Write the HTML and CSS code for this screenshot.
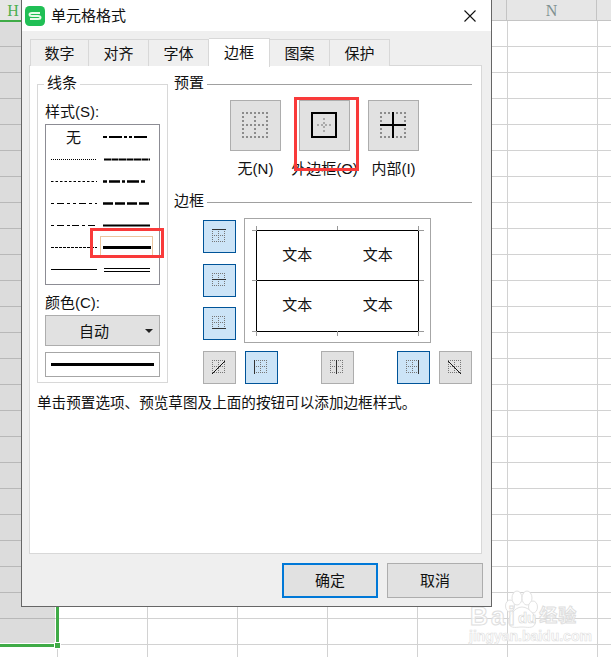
FILE: index.html
```html
<!DOCTYPE html>
<html>
	<head>
		<meta charset="UTF-8">
		<title>单元格格式</title>
		<link rel="stylesheet" href="styles.css">
	</head>
	<body>
		<!-- reusable dotted grids for the border buttons -->
		<svg class="defs" width="0" height="0">
			<symbol id="dots-big" viewBox="0 0 49 49">
				<path d="M11 12H37M11 24H37M11 36H37M12 11V37M24 11V37M36 11V37" fill="none" stroke="#8c8c8c" stroke-width="2" stroke-dasharray="2 2"/>
			</symbol>
			<symbol id="dots-outer" viewBox="0 0 49 49">
				<path d="M11 12H37M11 36H37M12 11V37M36 11V37" fill="none" stroke="#8c8c8c" stroke-width="2" stroke-dasharray="2 2"/>
			</symbol>
			<symbol id="dots-inner" viewBox="0 0 49 49">
				<path d="M17 24H31M24 17V31" fill="none" stroke="#aaa" stroke-width="2" stroke-dasharray="2 2"/>
			</symbol>
			<symbol id="dots-small" viewBox="0 0 31 31">
				<path d="M8 8.500H22M8 14.500H22M8 20.500H22M8.500 8V22M14.500 8V22M20.500 8V22" fill="none" stroke="#777" stroke-width="1" stroke-dasharray="1 1"/>
			</symbol>
		</svg>

		<div id="sheet">
			<div class="col-head">
				<div class="col-h">H</div>
				<div class="col-gap"></div>
				<div class="col-n">N</div>
				<div class="col-o"></div>
			</div>
			<div class="rows"></div>
			<div class="sel-col"></div>
			<div class="sel-line-h"></div>
			<div class="sel-line-bottom"></div>
			<div class="sel-line-right"></div>
			<div class="sel-handle"></div>
		</div>

		<div class="watermark">
			<svg class="paw" width="40" height="42" viewBox="0 0 40 42">
				<g fill="#fff" stroke="#e2e2e2">
					<ellipse cx="8" cy="16" rx="4.500" ry="6"/>
					<ellipse cx="15" cy="8" rx="5" ry="7"/>
					<ellipse cx="25" cy="8" rx="5" ry="7"/>
					<ellipse cx="31" cy="17" rx="4.500" ry="6"/>
					<path d="M20 17C28 17 36 28 33 34C31 39 25 37 20 37C15 37 9 39 7 34C5 28 12 17 20 17Z"/>
				</g>
			</svg>
			<div class="wm-top"><b>Bai</b><b class="wm-du">du</b><b class="wm-cn">经验</b></div>
			<div class="wm-url">jingyan.baidu.com</div>
		</div>

		<div id="dialog">
			<div class="titlebar">
				<svg class="logo" width="20" height="20" viewBox="0 0 20 20">
					<rect width="20" height="20" rx="4.500" fill="#20bf55"/>
					<path d="M15 7H7Q4.500 7 4.500 8.500T7 10H13Q15.500 10 15.500 11.500T13 13H5" fill="none" stroke="#e8fbe9" stroke-width="2"/>
				</svg>
				<span class="title">单元格格式</span>
				<svg class="close" width="12" height="12" viewBox="0 0 12 12">
					<path d="M0.500 0.500L11.500 11.500M11.500 0.500L0.500 11.500" stroke="#111" stroke-width="1.100"/>
				</svg>
			</div>

			<div class="body">
				<div class="tabs">
					<a href="javascript:;" class="tab">数字</a>
					<a href="javascript:;" class="tab">对齐</a>
					<a href="javascript:;" class="tab">字体</a>
					<a href="javascript:;" class="tab active">边框</a>
					<a href="javascript:;" class="tab">图案</a>
					<a href="javascript:;" class="tab">保护</a>
				</div>

				<div class="panel">
					<div class="panel-top">
						<fieldset class="line-group">
							<legend>线条</legend>
							<label class="field-label">样式(S):</label>
							<div class="style-list">
								<span class="none-item">无</span>
								<svg class="style-lines" width="113" height="159" viewBox="0 0 113 159">
									<g fill="none" stroke="#000">
										<path d="M5 34.500H51" stroke-dasharray="1 1"/>
										<path d="M5 56.500H51" stroke-dasharray="2.500 2"/>
										<path d="M5 78.500H51" stroke-dasharray="3 3 7 3 3 3"/>
										<path d="M5 100.500H51" stroke-dasharray="3 3 7 3 3 2 7 3"/>
										<path d="M5 122.500H51" stroke-dasharray="3 1"/>
										<path d="M5 144.500H51"/>
										<path d="M57 12H104" stroke-width="2" stroke-dasharray="4 2 13 2 3 2 3 2 13"/>
										<path d="M58 34.500H104" stroke-width="2" stroke-dasharray="7 .5"/>
										<path d="M57 56.500H102" stroke-width="2.500" stroke-dasharray="4 2 11 2 3 2 12 2 4"/>
										<path d="M57 78.500H103" stroke-width="2.500" stroke-dasharray="10 2 10 2 10 2 10"/>
										<path d="M57 100.500H104" stroke-width="2"/>
										<path d="M57 122.500H105" stroke-width="3"/>
										<path d="M58 143.500H104M58 146.500H104"/>
										<rect x="54.500" y="111.500" width="52" height="19" stroke="#d98a3c" stroke-dasharray="1 1"/>
									</g>
								</svg>
							</div>
							<label class="field-label color-label">颜色(C):</label>
							<div class="color-select">
								<span>自动</span>
								<i class="caret"></i>
							</div>
							<div class="line-preview"><i></i></div>
						</fieldset>

						<div class="right-col">
							<div class="section-head"><span>预置</span><i></i></div>
							<div class="presets">
								<div class="preset">
									<div class="big-btn">
										<svg width="49" height="49"><use href="#dots-big"/></svg>
									</div>
									<span>无(N)</span>
								</div>
								<div class="preset">
									<div class="big-btn">
										<svg width="49" height="49" viewBox="0 0 49 49">
											<use href="#dots-inner"/>
											<rect x="12" y="12" width="24" height="24" fill="none" stroke="#000" stroke-width="2"/>
										</svg>
									</div>
									<span>外边框(O)</span>
								</div>
								<div class="preset">
									<div class="big-btn">
										<svg width="49" height="49" viewBox="0 0 49 49">
											<use href="#dots-outer"/>
											<path d="M11 24H37M24 11V37" fill="none" stroke="#000" stroke-width="2"/>
										</svg>
									</div>
									<span>内部(I)</span>
								</div>
							</div>

							<div class="section-head border-head"><span>边框</span><i></i></div>
							<div class="border-area">
								<div class="side-btns">
									<div class="small-btn on">
										<svg width="31" height="31" viewBox="0 0 31 31"><use href="#dots-small"/><path d="M8 8.500H22" stroke="#333"/></svg>
									</div>
									<div class="small-btn on">
										<svg width="31" height="31" viewBox="0 0 31 31"><use href="#dots-small"/><path d="M8 14.500H22" stroke="#333"/></svg>
									</div>
									<div class="small-btn on">
										<svg width="31" height="31" viewBox="0 0 31 31"><use href="#dots-small"/><path d="M8 20.500H22" stroke="#333"/></svg>
									</div>
								</div>
								<div class="preview">
									<div class="preview-grid">
										<span>文本</span><span>文本</span>
										<span>文本</span><span>文本</span>
									</div>
									<svg class="ticks" width="185" height="123" viewBox="0 0 185 123">
										<path d="M7 11.500H12M7 61.500H12M7 112.500H12M11.500 7V12M11.500 112V117M92.500 7V11M92.500 112V117M173.500 7V12M173.500 112V117M174 11.500H179M174 61.500H179M174 112.500H179" fill="none" stroke="#999"/>
									</svg>
								</div>
							</div>
							<div class="bottom-btns">
								<div class="small-btn">
									<svg width="31" height="31" viewBox="0 0 31 31"><use href="#dots-small"/><path d="M8 22L21 9" stroke="#111"/></svg>
								</div>
								<div class="small-btn on">
									<svg width="31" height="31" viewBox="0 0 31 31"><use href="#dots-small"/><path d="M8.500 8V22" stroke="#333"/></svg>
								</div>
								<div class="small-btn mid">
									<svg width="31" height="31" viewBox="0 0 31 31"><use href="#dots-small"/><path d="M14.500 8V22" stroke="#333"/></svg>
								</div>
								<div class="small-btn on">
									<svg width="31" height="31" viewBox="0 0 31 31"><use href="#dots-small"/><path d="M20.500 8V22" stroke="#333"/></svg>
								</div>
								<div class="small-btn">
									<svg width="31" height="31" viewBox="0 0 31 31"><use href="#dots-small"/><path d="M8 9L21 22" stroke="#111"/></svg>
								</div>
							</div>
						</div>
					</div>
					<p class="hint">单击预置选项、预览草图及上面的按钮可以添加边框样式。</p>
				</div>

				<div class="actions">
					<a href="javascript:;" class="btn primary">确定</a>
					<a href="javascript:;" class="btn">取消</a>
				</div>
			</div>
			<!-- red marks someone drew on the screenshot -->
			<div class="mark mark-preset"></div>
			<div class="mark mark-line"></div>
		</div>
	</body>
</html>
```

FILE: styles.css
```css
html,body{
	margin: 0;
	padding: 0;
}
body{
	width: 611px;
	height: 657px;
	overflow: hidden;
	position: relative;
	background: #fff;
	font-family: "Liberation Sans", "Noto Sans CJK SC", sans-serif;
	font-size: 15px;
	color: #111;
}
a{
	text-decoration: none;
	color: #111;
}
.defs{
	position: absolute;
}

/* spreadsheet behind the dialog */
#sheet{
	width: 611px;
	height: 657px;
	position: relative;
	overflow: hidden;
}
.col-head{
	display: flex;
	height: 21px;
	background: #e6e6e6;
	font-family: "Liberation Serif", serif;
	font-size: 16px;
	line-height: 22px;
	box-sizing: border-box;
	border-bottom: 1px solid #c4c4c4;
}
.col-h{
	width: 26px;
	text-align: center;
	color: #4caf50;
}
.col-gap{
	width: 481px;
	box-sizing: border-box;
	border-right: 1px solid #c4c4c4;
}
.col-n{
	width: 90px;
	box-sizing: border-box;
	border-right: 1px solid #c4c4c4;
	text-align: center;
	color: #7f9090;
}
.col-o{
	flex: 1;
}
.rows{
	height: 636px;
	background-image:
		linear-gradient(to right, #d2d2d2 1px, transparent 1px),
		linear-gradient(to bottom, #d2d2d2 1px, transparent 1px);
	background-size: 90px 26px;
	background-position: 57px 25px;
}
.sel-col{
	position: absolute;
	left: 0;
	top: 21px;
	width: 55px;
	height: 622px;
	background-image: linear-gradient(to bottom, #b8b8b8 1px, transparent 1px);
	background-color: #dcdcdc;
	background-size: 55px 26px;
	background-position: 0 25px;
}
.sel-line-h{
	position: absolute;
	left: 0;
	top: 20px;
	width: 22px;
	height: 2px;
	background: #3fab47;
}
.sel-line-bottom{
	position: absolute;
	left: 0;
	top: 644px;
	width: 54px;
	height: 3px;
	background: #3fab47;
}
.sel-line-right{
	position: absolute;
	left: 56px;
	top: 600px;
	width: 3px;
	height: 42px;
	background: #3fab47;
}
.sel-handle{
	position: absolute;
	left: 55px;
	top: 643px;
	width: 5px;
	height: 5px;
	background: #3fab47;
	border: 1px solid #fff;
	margin: -1px;
}

/* dialog */
#dialog{
	position: absolute;
	left: 21px;
	top: 0;
	width: 471px;
	height: 607px;
	box-sizing: border-box;
	border: 1px solid #666;
	border-top: none;
	background: #efefef;
	display: flex;
	flex-direction: column;
}
.titlebar{
	height: 31px;
	flex: none;
	background: #fff;
	display: flex;
	align-items: center;
	padding: 0 15px 0 3px;
}
.title{
	margin-left: 6px;
	flex: 1;
	line-height: 31px;
}
.body{
	flex: 1;
	padding: 7px 8px 0 7px;
	display: flex;
	flex-direction: column;
}
.tabs{
	display: flex;
	height: 28px;
	padding-left: 1px;
	position: relative;
	z-index: 2;
}
.tab{
	width: 60px;
	height: 27px;
	margin-top: 1px;
	box-sizing: border-box;
	text-align: center;
	line-height: 27px;
	background: #efefef;
	border: 1px solid #d8d8d8;
	border-left: none;
	border-bottom: none;
}
.tab:first-child{
	width: 59px;
	border-left: 1px solid #d8d8d8;
}
.tab.active{
	height: 29px;
	margin-top: 0;
	width: 61px;
	background: #fff;
	line-height: 27px;
}
.panel{
	width: 453px;
	height: 489px;
	margin-top: -1px;
	box-sizing: border-box;
	background: #fff;
	border: 1px solid #d8d8d8;
	padding: 9px 8px 0 7px;
}
.panel-top{
	display: flex;
}

/* line style group */
.line-group{
	width: 131px;
	height: 308px;
	box-sizing: border-box;
	margin: 0;
	padding: 0 7px;
	border: 1px solid #d8d8d8;
	min-width: 0;
}
.line-group legend{
	padding: 0 3px;
	margin-left: -1px;
	line-height: 16px;
	height: 18px;
}
.field-label{
	display: block;
	line-height: 20px;
	margin-top: 9px;
}
.style-list{
	width: 115px;
	height: 161px;
	margin-top: 2px;
	box-sizing: border-box;
	border: 1px solid #8c8c94;
	position: relative;
}
.none-item{
	position: absolute;
	left: 20px;
	top: 3px;
	line-height: 20px;
}
.style-lines{
	display: block;
}
.color-label{
	margin-top: 8px;
}
.color-select{
	width: 115px;
	height: 31px;
	margin-top: 2px;
	box-sizing: border-box;
	background: #e1e1e1;
	border: 1px solid #adadad;
	display: flex;
	align-items: center;
	padding-left: 33px;
	position: relative;
}
.caret{
	position: absolute;
	right: 6px;
	top: 13px;
	border: 4px solid transparent;
	border-top: 4px solid #222;
	border-bottom: none;
}
.line-preview{
	width: 115px;
	height: 25px;
	margin-top: 6px;
	box-sizing: border-box;
	border: 1px solid #a6a6a6;
	background: #fff;
	padding: 10px 5px 0;
}
.line-preview i{
	display: block;
	height: 3px;
	background: #000;
}

/* right side: presets and border editor */
.right-col{
	width: 298px;
	margin-left: 6px;
}
.section-head{
	display: flex;
	align-items: center;
	height: 18px;
}
.section-head span{
	margin-right: 3px;
	line-height: 16px;
	margin-bottom: 2px;
}
.section-head i{
	width: 265px;
	height: 1px;
	background: #a0a0a0;
}
.presets{
	display: flex;
	gap: 18px;
	margin-top: 7px;
	padding-left: 56px;
}
.preset{
	width: 61px;
	display: flex;
	flex-direction: column;
	align-items: center;
	margin-left: -5px;
	margin-right: -5px;
}
.preset span{
	margin-top: 8px;
	line-height: 20px;
	white-space: nowrap;
}
.big-btn{
	width: 51px;
	height: 51px;
	box-sizing: border-box;
	border: 1px solid #adadad;
	background: #e1e1e1;
}
.big-btn svg,.small-btn svg{
	display: block;
}
.border-head{
	margin-top: 14px;
}
.border-area{
	display: flex;
	margin-top: 7px;
	padding-left: 29px;
}
.side-btns{
	padding-top: 2px;
	display: flex;
	flex-direction: column;
	gap: 10.500px;
}
.small-btn{
	width: 33px;
	height: 33px;
	box-sizing: border-box;
	border: 1px solid #adadad;
	background: #e1e1e1;
}
.small-btn.on{
	background: #cce4f7;
	border-color: #005499;
}
.preview{
	width: 187px;
	height: 125px;
	margin-left: 8px;
	box-sizing: border-box;
	border: 1px solid #a6a6a6;
	padding: 11px;
	position: relative;
}
.preview-grid{
	height: 102px;
	box-sizing: border-box;
	border: 1px solid #000;
	background: linear-gradient(#000, #000) 0 49px / 100% 1px no-repeat;
	display: grid;
	grid-template-columns: 1fr 1fr;
	grid-template-rows: 50px 50px;
}
.preview-grid span{
	text-align: center;
	line-height: 48px;
}
.ticks{
	position: absolute;
	left: 0;
	top: 0;
}
.bottom-btns{
	display: flex;
	margin-top: 8px;
	padding-left: 29px;
}
.bottom-btns .small-btn{
	margin-right: 9px;
}
.bottom-btns .mid{
	margin-left: 34px;
	margin-right: 43px;
}
.hint{
	margin: 9px 0 0 0;
	line-height: 20px;
	font-size: 14.600px;
	white-space: nowrap;
}

/* bottom buttons */
.actions{
	display: flex;
	justify-content: flex-end;
	gap: 9px;
	margin-top: 9px;
}
.btn{
	width: 96px;
	height: 35px;
	box-sizing: border-box;
	background: #e1e1e1;
	border: 1px solid #adadad;
	text-align: center;
	line-height: 33px;
}
.btn.primary{
	border: 2px solid #0078d7;
	line-height: 31px;
}

.mark{
	position: absolute;
	border: 3px solid #f93a3a;
	box-sizing: border-box;
	z-index: 5;
}
.mark-preset{
	left: 272px;
	top: 97px;
	width: 65px;
	height: 74px;
}
.mark-line{
	left: 68px;
	top: 228px;
	width: 74px;
	height: 30px;
}

/* baidu jingyan watermark */
.watermark{
	position: absolute;
	left: 466px;
	top: 590px;
	width: 125px;
	height: 60px;
}
.paw{
	position: absolute;
	left: 36px;
	top: 0;
}
.wm-top{
	position: absolute;
	left: 4px;
	top: 15px;
	display: flex;
	align-items: center;
	height: 22px;
	font-size: 25px;
	line-height: 22px;
	letter-spacing: 3px;
	color: rgba(255,255,255,.7);
	-webkit-text-stroke: 1px #dedede;
}
.wm-du{
	font-size: 15px;
	letter-spacing: 0;
	line-height: 16px;
	margin-top: 4px;
	-webkit-text-stroke: .6px #d6d6d6;
}
.wm-cn{
	font-size: 18px;
	letter-spacing: 1px;
	margin-left: 3px;
}
.wm-url{
	position: absolute;
	left: 3px;
	top: 39px;
	font-size: 14px;
	line-height: 14px;
	font-weight: bold;
	color: rgba(255,255,255,.7);
	-webkit-text-stroke: .6px #e0e0e0;
	white-space: nowrap;
}
```
